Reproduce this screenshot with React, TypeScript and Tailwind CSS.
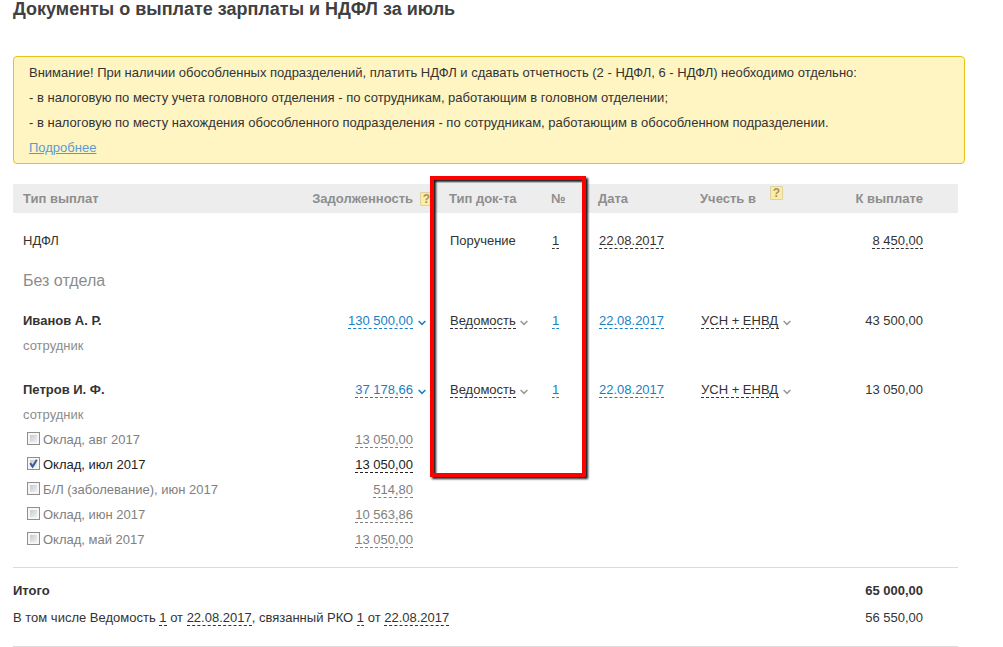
import type { ReactNode } from "react";

const dashed = "cursor-pointer border-b border-dashed border-current leading-[15px]";

function Chevron({ className }: { className: string }) {
  return (
    <svg viewBox="0 0 8 6" className={`pointer-events-none h-[6px] w-[8px] shrink-0 ${className}`} fill="none" aria-hidden="true">
      <path d="M0.6 1 L4 4.4 L7.4 1" stroke="currentColor" strokeWidth="1.5" />
    </svg>
  );
}

function Help({ label }: { label: string }) {
  return (
    <button
      type="button"
      aria-label={label}
      className="flex h-[14px] w-[13px] items-center justify-center rounded-[1px] border border-[#ddd2a0] bg-[#fdeca6] text-[12px] leading-none font-bold text-[#a8925a]"
    >
      ?
    </button>
  );
}

function Editable({ children, className = "" }: { children: ReactNode; className?: string }) {
  return (
    <button type="button" className={`${dashed} ${className}`}>
      {children}
    </button>
  );
}

function Choice({ label, value }: { label: string; value: string }) {
  return (
    <span className="inline-flex items-center gap-[4px]">
      <select aria-label={label} className={`${dashed} appearance-none rounded-none bg-transparent p-0`}>
        <option>{value}</option>
      </select>
      <Chevron className="mt-[4px] text-[#999]" />
    </span>
  );
}

type Person = { name: string; debt: string; total: string; top: string };

function PersonRow({ name, debt, total, top }: Person) {
  return (
    <tr className="align-top">
      <td className={`pl-[10px] ${top}`}>
        <div className="font-bold">{name}</div>
        <div className="text-[#8c8c8c]">сотрудник</div>
      </td>
      <td className={`pr-[14px] text-right text-[#1b7fc4] ${top}`}>
        <button type="button" className="inline-flex cursor-pointer items-center gap-[5px]">
          <span className={dashed}>{debt}</span>
          <Chevron className="mt-[4px]" />
        </button>
      </td>
      <td className={`pl-[10px] ${top}`}>
        <Choice label="Тип документа" value="Ведомость" />
      </td>
      <td className={`pl-[10px] text-[#1b7fc4] ${top}`}>
        <a href="#doc" className={dashed}>1</a>
      </td>
      <td className={`pl-[10px] text-[#1b7fc4] ${top}`}>
        <a href="#date" className={dashed}>22.08.2017</a>
      </td>
      <td className={`pl-[10px] ${top}`}>
        <Choice label="Учесть в" value="УСН + ЕНВД" />
      </td>
      <td className={`pr-[35px] text-right ${top}`}>{total}</td>
    </tr>
  );
}

const accruals = [
  { id: "aug", label: "Оклад, авг 2017", sum: "13 050,00", checked: false },
  { id: "jul", label: "Оклад, июл 2017", sum: "13 050,00", checked: true },
  { id: "sick", label: "Б/Л (заболевание), июн 2017", sum: "514,80", checked: false },
  { id: "jun", label: "Оклад, июн 2017", sum: "10 563,86", checked: false },
  { id: "may", label: "Оклад, май 2017", sum: "13 050,00", checked: false },
];

function AccrualRow({ id, label, sum, checked }: (typeof accruals)[number]) {
  return (
    <tr className={checked ? "text-[#222]" : "text-[#808080]"}>
      <td className="pl-[14px]">
        <div className="flex items-center gap-[3px]">
          <span className="mb-[2px] grid h-[13px] w-[13px]">
            <input
              id={id}
              type="checkbox"
              defaultChecked={checked}
              className="peer col-start-1 row-start-1 h-[13px] w-[13px] appearance-none border border-[#8e8f8f] bg-linear-to-br from-[#bcc2c9] to-[#fafafa] shadow-[inset_0_0_0_2px_#f6f6f6]"
            />
            <svg viewBox="0 0 13 13" className="pointer-events-none invisible z-10 col-start-1 row-start-1 peer-checked:visible" fill="none" aria-hidden="true">
              <path d="M3.2 6.2 L5.6 9.6 L9.8 2.8" stroke="#3c5a9c" strokeWidth="2" />
            </svg>
          </span>
          <label htmlFor={id}>{label}</label>
        </div>
      </td>
      <td className="pr-[27px] text-right">
        <Editable>{sum}</Editable>
      </td>
      <td colSpan={5} />
    </tr>
  );
}

export default function App() {
  return (
    <main className="bg-white pr-[38px] pl-[13px] font-['Liberation_Sans',Arial,sans-serif] text-[13px] leading-[25px] text-[#333]">
      <h1 className="text-[18px] leading-[18px] font-bold text-[#404040]">Документы о выплате зарплаты и НДФЛ за июль</h1>

      <section className="mt-[38px] rounded-[4px] border border-[#e6c317] bg-[#fef5c3] px-[15px] py-[3px]">
        <p>Внимание! При наличии обособленных подразделений, платить НДФЛ и сдавать отчетность (2 - НДФЛ, 6 - НДФЛ) необходимо отдельно:</p>
        <p>- в налоговую по месту учета головного отделения - по сотрудникам, работающим в головном отделении;</p>
        <p>- в налоговую по месту нахождения обособленного подразделения - по сотрудникам, работающим в обособленном подразделении.</p>
        <p>
          <a href="#more" className="text-[#5b9bd5] underline">Подробнее</a>
        </p>
      </section>

      <div className="relative mt-[20px] mr-[7px]">
        <table className="w-full table-fixed border-collapse">
          <colgroup>
            <col />
            <col className="w-[150px]" />
            <col className="w-[102px]" />
            <col className="w-[47px]" />
            <col className="w-[102px]" />
            <col className="w-[120px]" />
            <col className="w-[147px]" />
          </colgroup>
          <thead>
            <tr className="bg-[#ededed] text-left text-[#8e8e8e]">
              <th className="py-[2px] pl-[10px]">Тип выплат</th>
              <th className="pr-[7px]">
                <div className="flex items-center justify-end gap-[7px]">
                  Задолженность
                  <Help label="О задолженности" />
                </div>
              </th>
              <th className="pl-[9px]">Тип док-та</th>
              <th className="pl-[9px]">№</th>
              <th className="pl-[9px]">Дата</th>
              <th className="pl-[9px]">
                <div className="flex gap-[14px]">
                  Учесть в
                  <Help label="О способе учета" />
                </div>
              </th>
              <th className="pr-[35px] text-right">К выплате</th>
            </tr>
          </thead>
          <tbody>
            <tr>
              <td className="pt-[15px] pl-[10px]">НДФЛ</td>
              <td />
              <td className="pt-[15px] pl-[10px]">Поручение</td>
              <td className="pt-[15px] pl-[10px]"><Editable>1</Editable></td>
              <td className="pt-[15px] pl-[10px]"><Editable>22.08.2017</Editable></td>
              <td />
              <td className="pt-[15px] pr-[35px] text-right"><Editable>8 450,00</Editable></td>
            </tr>
            <tr>
              <td colSpan={7} className="pt-[15px] pl-[10px] text-[16px] text-[#8c8c8c]">Без отдела</td>
            </tr>
            <PersonRow name="Иванов А. Р." debt="130 500,00" total="43 500,00" top="pt-[15px]" />
            <PersonRow name="Петров И. Ф." debt="37 178,66" total="13 050,00" top="pt-[19px]" />
            {accruals.map((item) => (
              <AccrualRow key={item.id} {...item} />
            ))}
          </tbody>
        </table>

        <div className="pointer-events-none absolute top-[-8px] right-[372px] h-[301px] w-[156px] border-4 border-[#ff0000] drop-shadow-[2px_2px_1px_rgba(0,0,0,0.9)]" />
      </div>

      <section className="mt-[15px] mr-[7px] border-y border-[#dcdcdc] pt-[10px] pb-[16px]">
        <div className="flex justify-between pr-[35px] font-bold">
          <span>Итого</span>
          <span>65 000,00</span>
        </div>
        <div className="mt-[2px] flex justify-between pr-[35px]">
          <span>
            В том числе Ведомость <Editable>1</Editable> от <Editable>22.08.2017</Editable>, связанный РКО <Editable>1</Editable> от <Editable>22.08.2017</Editable>
          </span>
          <span>56 550,00</span>
        </div>
      </section>
    </main>
  );
}
